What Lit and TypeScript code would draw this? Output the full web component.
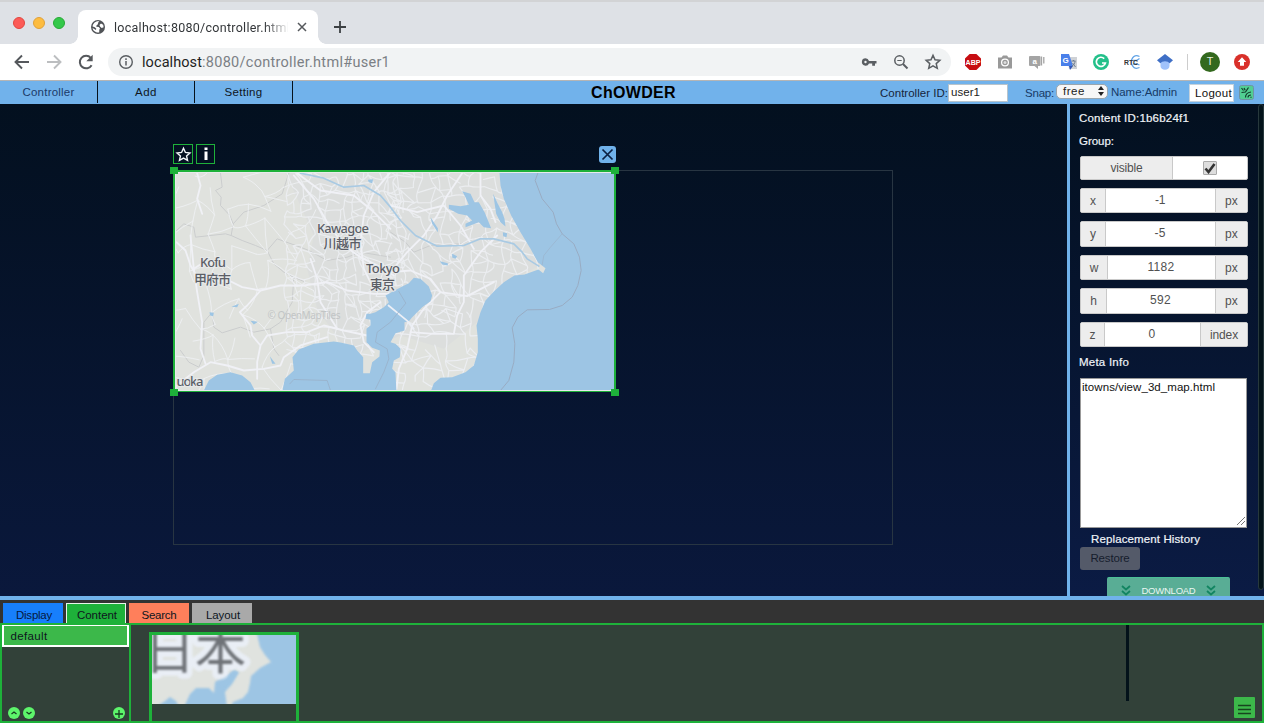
import { LitElement, html, svg, css } from "lit";
import { customElement } from "lit/decorators.js";

const UI = '"Liberation Sans", Arial, "Noto Sans CJK JP", sans-serif';
const CHROME = 'Roboto, "Liberation Sans", sans-serif';

// Letter-spacing that makes a label occupy a given advance width.
const pen = document.createElement("canvas").getContext("2d")!;
const spacing = (text: string, width: number, font: string) => {
  pen.font = font;
  return ((width - pen.measureText(text).width) / text.length).toFixed(3);
};
const label = (text: string, width: number, size = 11.5, weight = 400, family = UI) =>
  html`<span class="label" style="letter-spacing:${spacing(text, width, `${weight} ${size}px ${family}`)}px">${text}</span>`;

// Repeatable pseudo-random numbers for the minor road network.
const random = (seed: number) => () => {
  seed = (seed * 1664525 + 1013904223) % 4294967296;
  return seed / 4294967296;
};
const roads = (x0: number, y0: number, x1: number, y1: number, step: number, keep: number, seed: number) => {
  const r = random(seed);
  const cols = Math.ceil((x1 - x0) / step) + 1;
  const rows = Math.ceil((y1 - y0) / step) + 1;
  const pts = Array.from({ length: rows }, (_, j) =>
    Array.from({ length: cols }, (_, i) => [x0 + (i + (r() - 0.5) * 0.9) * step, y0 + (j + (r() - 0.5) * 0.9) * step])
  );
  let d = "";
  const link = (a: number[], b: number[]) => {
    const mx = (a[0] + b[0]) / 2 + (r() - 0.5) * step * 0.4;
    const my = (a[1] + b[1]) / 2 + (r() - 0.5) * step * 0.4;
    d += `M${a[0].toFixed(0)} ${a[1].toFixed(0)}Q${mx.toFixed(0)} ${my.toFixed(0)} ${b[0].toFixed(0)} ${b[1].toFixed(0)}`;
  };
  for (let j = 0; j < rows; j++)
    for (let i = 0; i < cols; i++) {
      if (i + 1 < cols && r() < keep) link(pts[j][i], pts[j][i + 1]);
      if (j + 1 < rows && r() < keep) link(pts[j][i], pts[j + 1][i]);
      if (i + 1 < cols && j + 1 < rows && r() < keep * 0.25) link(pts[j][i], pts[j + 1][i + 1]);
    }
  return d;
};

@customElement("kanto-map")
class KantoMap extends LitElement {
  static styles = css`
    :host { display: block; }
    svg { display: block; width: 100%; height: 100%; }
    .place { font: 500 13px "Noto Sans", "Noto Sans CJK JP", sans-serif; fill: #5b5e66; stroke: #e6e8e9; stroke-width: 2px; paint-order: stroke; text-anchor: middle; }
    .credit { font: 10px "Noto Sans", sans-serif; fill: #c2c5c6; }
  `;
  render() {
    return html`<svg viewBox="175.500 172.500 438 217" preserveAspectRatio="none">
      <rect x="175" y="172" width="440" height="219" fill="#e0e2de" />
      <g transform="translate(160 135) scale(.33333)" fill="none" stroke-linejoin="round" stroke-linecap="round">
        <path fill="#dcdedd" d="M370 100L1030 100 1080 250 1140 390 1040 440 950 560 850 640 720 600 600 650 540 620 470 520 440 400 460 300Z" />
        <g stroke="#cbcdce" stroke-width="3">
          <path d="M180 113L185 155 165 165 182 185 180 210 208 240 218 265 212 300 245 315 285 330 320 345 350 310 420 335 445 345 500 375 560 365 600 350 690 365" />
          <path d="M320 345L340 385 370 410 400 425 435 440M400 425L395 500 360 560 330 580 280 590 240 575 185 592 160 575 155 530 130 560 130 660 115 695 85 680 60 645M48 285L70 265 100 275 105 305 195 295 212 300M218 265L250 230 310 210 365 175 385 113M330 580L340 640 355 660" />
          <path d="M690 290L735 320 760 350 810 330 900 325 970 300" />
        </g>
        <path stroke="#edeff1" stroke-width="3" d="${roads(40, 100, 440, 770, 58, 0.48, 7)}" />
        <path stroke="#ebedf0" stroke-width="3.5" d="${roads(380, 100, 720, 640, 25, 0.72, 21)}" />
        <path stroke="#ebedf0" stroke-width="3.5" d="${roads(690, 100, 1130, 530, 31, 0.7, 33)}" />
        <path stroke="#eceef2" stroke-width="3.5" d="${roads(690, 530, 970, 770, 36, 0.7, 5)}" />
        <g stroke="#f0f1f6" stroke-width="5.5">
          <path d="M48 320L75 345 90 390 120 440 205 435 245 455 300 465 360 450 430 450 500 440 560 465 640 475 700 475M90 300L95 350 100 400 110 470 125 560 120 640 135 685" />
          <path d="M100 400L130 380 160 385M300 465L260 510 238 530 270 570 275 600 300 630 320 600 380 590 440 590 490 570 550 585 620 600M300 630L290 680 290 730" />
          <path d="M48 750L100 710 150 680 200 690 250 705 310 700 360 690 370 665 420 630 500 605M110 113L120 150 110 190 125 235" />
          <path d="M400 120L460 190 500 260 550 330 600 365 660 395 700 420M690 110L640 170 610 240 600 320 610 400 640 460" />
          <path d="M690 280L640 230 580 180 480 165 410 113M450 370L470 430 480 500 530 580" />
          <path d="M905 113L860 180 830 240 790 300 740 350 690 410M690 410L750 405 810 430 840 470 920 482 1000 440M840 470L790 520 755 570 740 640 715 700 708 760" />
          <path d="M750 590L820 595 880 595 890 540 910 500 910 420 960 350 1010 300M960 113L960 180 990 220 1005 260M690 210L770 230 850 210 900 270 940 340M660 500L620 530 600 570 610 620 640 650" />
        </g>
        <path stroke="#a9cae3" stroke-width="5" d="M420 113L490 128 550 155 610 150 660 180 690 215 720 255 765 300 830 332 910 330 960 310 1000 310 1060 325 1085 350 1100 370 1135 392" />
        <g fill="#9dc5e4">
          <path d="M1016 100L1020 150 1030 190 1052 240 1080 290 1110 340 1132 380 1155 398 1148 413 1134 402 1092 417 1062 420 1030 440 1000 468 975 495 960 530 948 570 952 610 952 650 940 690 915 710 875 725 840 727 820 743 810 770 1400 770 1400 100Z" />
          <path transform="translate(540 375)" d="M135 105L185 78 205 68 220 52 240 55 265 78 275 105 270 122 245 140 215 170 205 182 192 185 192 210 165 218 150 245 165 250 180 265 178 290 160 300 155 325 165 335 168 400H-176L-167 355-140 330-144 290-125 267-80 250-20 243 0 246 40 255 50 270 68 290 68 338 88 338 95 305 117 288 118 270 95 262 78 245 78 205 90 195 90 178 75 175 78 160 90 160 105 155 130 140 145 125Z" />
          <path d="M125 775L145 735 170 718 210 710 245 720 270 740 288 775ZM328 662L345 685 335 685ZM213 514L235 505 230 515ZM147 530L160 532 158 542 149 540ZM270 556L292 559 280 567ZM622 133L638 131 635 143 625 140Z" />
          <path d="M905 167L930 175 942 200 955 200 973 232 992 278 970 275 955 260 915 275 915 265 935 255 920 240 893 235 865 220 865 208 900 212 925 208 915 185ZM998 175L1012 205 1025 230 1032 250 1035 273 1020 260 1007 235ZM810 245L832 278 832 290 815 265ZM875 355L890 362 885 370 875 366ZM838 377L862 383 862 390 845 387ZM1027 290L1040 293 1038 305 1028 302Z" />
        </g>
        <path stroke="#eceff6" stroke-width="5" d="M684 510L745 560 760 580" />
        <g stroke="#99acc3" stroke-width="3">
          <path d="M1132 113L1124 135 1145 190 1178 230 1188 265 1205 295 1240 325 1257 365 1262 405 1252 450 1235 485 1205 510 1167 522 1100 523 1072 545 1055 577 1063 625 1060 680 1045 735 1020 765" />
          <path d="M1205 295L1170 335 1150 360 1145 388" stroke-width="1.500" />
          <path d="M715 468L736 503 690 560 650 590 645 620 680 640 685 670 670 710 645 760M388 745L400 732 500 735 510 765" stroke-width="2" />
        </g>
      </g>
      <text class="credit" x="267" y="318.500" textLength="73">© OpenMapTiles</text>
      <text class="place" x="342.500" y="232" textLength="52">Kawagoe</text><text class="place" x="342" y="247.500" textLength="38">川越市</text>
      <text class="place" x="212.500" y="266.500" textLength="26">Kofu</text><text class="place" x="212" y="283" textLength="37">甲府市</text>
      <text class="place" x="382.500" y="272.500" textLength="34">Tokyo</text><text class="place" x="382" y="288" textLength="25">東京</text>
      <text class="place" x="189.500" y="385" textLength="27">uoka</text>
    </svg>`;
  }
}

@customElement("japan-thumbnail")
class JapanThumbnail extends LitElement {
  static styles = css`
    :host { display: block; }
    svg { display: block; width: 100%; height: 100%; }
    .name { font: 400 51px "Noto Sans CJK JP", sans-serif; fill: #6f7378; stroke: #e9eef5; stroke-width: 12px; stroke-linejoin: round; paint-order: stroke; filter: blur(1px); }
    .land { filter: blur(.8px); }
  `;
  render() {
    return html`<svg viewBox="0 0 144 69">
      <rect width="144" height="69" fill="#e0e3df" />
      <path class="land" fill="#9dc5e4" d="M104 -5L108 12 113 20 119 27 108 33 99 41 98 48 96 57 91 63 81 67 78 74H150V-5Z" />
      <path class="land" fill="#9dc5e4" d="M32 72L38 59 44 53 57 53 62 58 63 47 72 43 82 35 87 37 80 49 73 57 75 72ZM4 72L13 66 18 62 24 66 27 72Z" />
      <text class="name" x="-8" y="34">日本</text>
      <path class="land" fill="#9dc5e4" opacity=".5" d="M64 46L73 42 82 35 86 38 79 48 72 53Z" />
    </svg>`;
  }
}

const star = "M12 3.200l2.700 5.900 6.400.7-4.800 4.300 1.400 6.300-5.700-3.300-5.700 3.300 1.400-6.300-4.800-4.300 6.400-.7z";

@customElement("browser-chrome")
class BrowserChrome extends LitElement {
  static styles = css`
    :host { display: block; height: 81px; box-sizing: border-box; border-bottom: 1px solid #b5b5b5; background: #fff; font: 14.5px Roboto, sans-serif; }
    svg { display: block; flex: none; }
    .label { white-space: nowrap; }
    .strip { height: 44px; background: #dee1e6; display: flex; box-sizing: border-box; padding-left: 13px; border-top: 2px solid #d2d3d5; }
    .lights { display: flex; gap: 8px; padding-top: 15px; width: 65px; }
    .light { width: 12px; height: 12px; border-radius: 50%; box-sizing: border-box; }
    .red { background: #fc5b57; border: 1px solid #e2463f; }
    .amber { background: #fdbc40; border: 1px solid #e0a13a; }
    .green { background: #34c84a; border: 1px solid #27aa35; }
    .tab { width: 240px; height: 34px; margin-top: 8px; background: #fff; border-radius: 8px 8px 0 0; display: flex; align-items: center; box-sizing: border-box; padding-left: 12px; position: relative; }
    .tab::before, .tab::after { content: ""; position: absolute; bottom: 0; width: 8px; height: 8px; }
    .tab::before { left: -8px; background: radial-gradient(circle at 0 0, transparent 7.5px, #fff 8px); }
    .tab::after { right: -8px; background: radial-gradient(circle at 100% 0, transparent 7.5px, #fff 8px); }
    .title { width: 174px; margin: 0 8px 0 8px; overflow: hidden; font-size: 12.5px; color: #333639; -webkit-mask: linear-gradient(to right, #000 150px, transparent 176px); }
    .plus { margin: 17px 0 0 14px; }
    .bar { height: 36px; display: flex; align-items: center; padding-left: 13px; }
    .back { margin-right: 14px; }
    .forward { margin-right: 14px; }
    .omni { margin-left: 13px; width: 843px; height: 28px; box-sizing: border-box; border-radius: 14px; background: #f1f3f4; display: flex; align-items: center; padding: 0 9px 0 10px; }
    .url { margin-left: 8px; flex: 1; color: #7b8085; }
    .host { color: #222; }
    .tools { display: flex; gap: 14px; }
    .ext { display: flex; align-items: center; gap: 14px; margin-left: 13px; }
    .rule { width: 1px; height: 16px; background: #cdcdcd; margin: 0 -2px 0 -1px; }
    .avatar { width: 20px; height: 20px; border-radius: 50%; background: #33691e; color: #e8f0e0; font-size: 11px; line-height: 20px; text-align: center; margin-right: -1px; }
    .abp { font: 700 8px "Liberation Sans", sans-serif; fill: #fff; }
    .tiny { font: 700 8px "Liberation Sans", sans-serif; }
  `;
  render() {
    return html`
      <div class="strip">
        <div class="lights"><i class="light red"></i><i class="light amber"></i><i class="light green"></i></div>
        <div class="tab">
          <svg width="16" height="16" viewBox="0 0 16 16"><circle cx="8" cy="8" r="7" fill="#505357" /><path fill="#fff" d="M9.300 2.400l-1.500 1.500.4 1.200-1.600 1.100-.3 1.600 2.500.1 1.200 1.500-.7 1.400-.1 2.600C6.600 14 3 12.300 2.600 9l3.300 2 .4-1.300-1.500-1.500-2.200-.7C2.800 4.500 5.700 1.700 9.300 2.400zM11 4.500l2.200 1.300.4 2.500-1.900.7-1.500-1.300L9.400 6z" /></svg>
          <div class="title">${label("localhost:8080/controller.html", 176, 12.5, 400, CHROME)}</div>
          <svg width="12" height="12" viewBox="0 0 12 12"><path d="M2 2l8 8M10 2l-8 8" stroke="#55585c" stroke-width="1.500" /></svg>
        </div>
        <svg class="plus" width="16" height="16" viewBox="0 0 16 16"><path d="M8 2v12M2 8h12" stroke="#3c4043" stroke-width="1.800" /></svg>
      </div>
      <div class="bar">
        <svg class="back" width="18" height="18" viewBox="0 0 18 18"><path d="M16 9H3M9 2.500L2.500 9 9 15.500" fill="none" stroke="#55585c" stroke-width="1.900" /></svg>
        <svg class="forward" width="18" height="18" viewBox="0 0 18 18"><path d="M2 9h13M9 2.500L15.500 9 9 15.500" fill="none" stroke="#bcbec0" stroke-width="1.900" /></svg>
        <svg width="18" height="18" viewBox="0 0 18 18"><path d="M14.600 12.200A6.300 6.300 0 1 1 13.800 4.800" fill="none" stroke="#55585c" stroke-width="2" /><path d="M15.700 1.800v6.400H9.300z" fill="#55585c" /></svg>
        <div class="omni">
          <svg width="16" height="16" viewBox="0 0 16 16"><circle cx="8" cy="8" r="6.300" fill="none" stroke="#5a5e62" stroke-width="1.400" /><path d="M8 7v4.500M8 4.300v1.600" stroke="#5a5e62" stroke-width="1.500" /></svg>
          <div class="url"><span class="host">${label("localhost", 60, 14.5, 400, CHROME)}</span>${label(":8080/controller.html#user1", 188, 14.5, 400, CHROME)}</div>
          <div class="tools">
            <svg width="18" height="18" viewBox="0 0 18 18"><path fill="#5a5e62" fill-rule="evenodd" d="M5.500 5.300a3.700 3.700 0 0 1 3.500 2.600h7.500v2.500H15v2.300h-2.800v-2.300H9a3.700 3.700 0 1 1-3.500-5.100zm0 2.500a1.200 1.200 0 1 0 0 2.400 1.200 1.200 0 0 0 0-2.400z" /></svg>
            <svg width="18" height="18" viewBox="0 0 18 18"><g fill="none" stroke="#5a5e62"><circle cx="7.500" cy="7.500" r="4.700" stroke-width="1.500" /><path d="M11 11l4.500 4.500" stroke-width="2" /><path d="M5.300 7.500h4.400" /></g></svg>
            <svg width="18" height="18" viewBox="0 0 24 24"><path d="${star}" fill="none" stroke="#5a5e62" stroke-width="2" /></svg>
          </div>
        </div>
        <div class="ext">
          <svg width="18" height="18" viewBox="0 0 18 18"><path d="M5.600 1h6.800L17 5.600v6.800L12.400 17H5.600L1 12.400V5.600z" fill="#c70d12" /><text class="abp" x="1.500" y="11.900" textLength="15" lengthAdjust="spacingAndGlyphs">ABP</text></svg>
          <svg width="18" height="18" viewBox="0 0 18 18"><path d="M2 4.500h3.500L7 2.500h4l1.500 2H16v11H2z" fill="#999"/><circle cx="9" cy="9.500" r="3.400" fill="none" stroke="#fff" stroke-width="1.300" /><circle cx="9" cy="9.500" r="1.500" fill="#ddd" /></svg>
          <svg width="18" height="18" viewBox="0 0 18 18"><path d="M2 3h9.500q1 0 1 1v8q0 1-1 1H10v3l-3.500-3H2q-1 0-1-1V4q0-1 1-1z" fill="#a4a4a4" /><path d="M13.500 3.500v9M15.800 4v6.500" fill="none" stroke="#a4a4a4" stroke-width="1.300" /><text class="tiny" x="4.500" y="10.500" fill="#fff">a</text></svg>
          <svg width="18" height="18" viewBox="0 0 18 18"><path d="M7 4h10v12H9z" fill="#cfd2d6" /><path d="M1 1h8l4 12H1z" fill="#4a80ea" /><path d="M9 13h4l-3 4z" fill="#3457b5" /><text class="tiny" x="2.500" y="9.500" fill="#fff">G</text><path d="M11.500 8h4M13.500 7v1M12 13c2-1 3-3 3-5M12.500 10l3 4" fill="none" stroke="#6f7d90" /></svg>
          <svg width="18" height="18" viewBox="0 0 18 18"><circle cx="9" cy="9" r="8" fill="#23c08a" /><path d="M12.200 5.600A4.600 4.600 0 1 0 13.400 10H10" fill="none" stroke="#fff" stroke-width="1.700" /></svg>
          <svg width="18" height="18" viewBox="0 0 18 18"><path d="M15.500 3.500C10 1 8.500 5 7.500 7v4c1 2 2.500 6 8 3.500M9 7.500h3.500l3-2M9 11h3.500l3 1" fill="none" stroke="#63a4e6" stroke-width="1.300" /><text class="tiny" x="0" y="11.500" fill="#333" textLength="14" lengthAdjust="spacingAndGlyphs">RTC</text></svg>
          <svg width="18" height="18" viewBox="0 0 18 18"><path d="M4.500 8h9v5a4.500 3.800 0 0 1-9 0z" fill="#a0c2fb" /><path d="M9 1l8 6.300-3.300 3a5.300 4 0 0 0-9.400 0L1 7.300z" fill="#3f6fc6" /></svg>
          <i class="rule"></i>
          <div class="avatar">T</div>
          <svg width="18" height="18" viewBox="0 0 18 18"><circle cx="9" cy="9" r="8" fill="#d9302a" /><path d="M9 4.300l4.300 4.700H11v3.700H7V9H4.700z" fill="#fff" /></svg>
        </div>
      </div>`;
  }
}

@customElement("app-root")
class AppRoot extends LitElement {
  static styles = css`
    :host { display: flex; flex-direction: column; width: 1264px; height: 724px; overflow: hidden; font: 11.5px "Liberation Sans", Arial, "Noto Sans CJK JP", sans-serif; color: #0e161e; }
    * { box-sizing: border-box; }
    svg { display: block; flex: none; }
    .label { white-space: nowrap; }
    .menu { display: grid; grid-template-columns: 98px 97px 98px 1fr; height: 23px; background: #71b2eb; position: relative; }
    .item { border-right: 1px solid #06121c; height: 22px; line-height: 22px; text-align: center; }
    .current { color: #1c3a68; }
    .status { display: flex; align-items: center; justify-content: flex-end; padding: 0 10px 0 0; color: #16243a; }
    .brand { position: absolute; left: 591px; top: 2px; font-size: 16px; font-weight: 700; line-height: 20px; color: #000; }
    .field { width: 60px; height: 18px; background: #fff; border: 1px solid #b8c4cc; line-height: 14px; padding-left: 2px; margin-right: 17px; color: #222; }
    .select { width: 52px; height: 15px; border: 1px solid #9aa6ae; border-radius: 5px; background: #f7f7f7; display: flex; align-items: center; justify-content: space-between; padding: 0 2px 0 6px; margin: -3px 3px 0 2px; color: #222; }
    .who { color: #173a66; margin-right: 12px; padding-bottom: 2px; }
    .snap { color: #173a66; }
    .logout { width: 45px; height: 18px; background: #fff; border: 1px solid #c5d2dc; line-height: 16px; padding-left: 5px; margin-right: 5px; color: #111; }
    .link { width: 15px; }
    .work { height: 492px; display: grid; grid-template-columns: 1067px 1fr; }
    .stage { position: relative; background: linear-gradient(#03101f, #0a183c); }
    .screen { position: absolute; left: 173px; top: 66px; width: 720px; height: 375px; border: 1px solid #283542; }
    .content { position: absolute; left: 173px; top: 66px; width: 443px; height: 222px; border: 3px solid #1eb13a; border-width: 2px 2px 1px 2px; background: #e8ebec; padding: 1px 1px 2px 1px; }
    .content kanto-map { width: 438px; height: 217px; }
    .grip { position: absolute; width: 8px; height: 7px; background: #1eb13a; }
    .nw { left: 170px; top: 63px; } .ne { left: 611px; top: 63px; }
    .sw { left: 170px; top: 285px; } .se { left: 611px; top: 285px; }
    .mark { position: absolute; left: 173px; top: 40px; display: flex; gap: 3px; }
    .box { height: 20px; width: 20px; border: 1px solid #1eb13a; display: grid; place-items: center; }
    .slim { width: 19px; }
    .close { position: absolute; left: 599px; top: 42px; width: 17px; height: 17px; border-radius: 3px; background: #70b2eb; }
    .side { background: linear-gradient(#03101f, #0b1b44); border-left: 3px solid #70b2eb; color: #f0f4f8; display: flex; overflow: hidden; }
    .props { width: 187px; padding: 5px 10px 0 10px; display: flex; flex-direction: column; flex: none; }
    .props .head { line-height: 18px; height: 18px; margin-left: -1px; flex: none; -webkit-text-stroke: .2px #f0f4f8; }
    .group { margin-top: 5px; }
    .fields { display: flex; flex-direction: column; gap: 8px; margin-top: 6px; width: 168px; }
    .row { display: flex; height: 25.400px; border: 1px solid #c9c9c9; border-radius: 2px; background: #fff; color: #515151; overflow: hidden; text-align: center; line-height: 24px; font-size: 12px; }
    .short { height: 24px; }
    .key, .unit { background: #ededed; flex: none; }
    .key { border-right: 1px solid #c9c9c9; }
    .unit { border-left: 1px solid #c9c9c9; }
    .value { flex: 1; line-height: 22px; padding-right: 1px; }
    .k24 { width: 24px; } .k25 { width: 25px; } .k26 { width: 26px; } .k27 { width: 27px; } .wide { width: 92px; line-height: 22px; }
    .u { width: 32px; } .u48 { width: 47px; }
    .check { width: 14px; height: 14px; margin: 4px auto; border: 1px solid #aaa; background: #ddd; border-radius: 1px; }
    .meta { margin-top: 6px; }
    .note { margin-top: 7px; width: 167px; height: 150px; flex: none; border: 1px solid #999; background: #fff; color: #111; padding: 1px 2px 1px 1px; line-height: 14px; display: flex; justify-content: space-between; }
    .corner { align-self: flex-end; margin-right: -2px; }
    .props .history { margin: 2px 0 0 11px; }
    .restore { flex: none; width: 60px; height: 23px; border-radius: 3px; background: #545a69; color: #161d2d; text-align: center; line-height: 22px; margin-top: -1px; }
    .download { flex: none; width: 123px; height: 26px; margin: 7px 0 0 27px; border-radius: 2px 2px 0 0; background: #59ad95; border-top: 1px solid #4bc097; display: flex; align-items: center; justify-content: space-between; padding: 0 14px; color: #eaf6f2; font-size: 9.5px; }
    .scroll { width: 6px; height: 486px; margin-left: 1px; border: 1px solid #27383c; border-radius: 3px; background: #04141b; }
    .tabs { border-top: 4px solid #70b2eb; height: 27px; background: #333; display: flex; gap: 3px; padding: 3px 0 0 3px; }
    .pick { width: 60px; height: 20px; text-align: center; line-height: 14px; padding-top: 5px; }
    .display { background: #177ffc; color: #05183c; padding-left: 2px; }
    .cont { background: #1eb13a; border: 1px solid #e8f5ea; border-bottom: 0; padding: 4px 0 0 2px; }
    .search { background: #ff7f5b; }
    .layout { background: #a9a9a9; padding-left: 2px; }
    .dock { flex: 1; border: 2px solid #1eb13a; background: #324139; display: flex; margin-bottom: 1px; height: 100px; min-height: 0; position: relative; overflow: hidden; }
    .groups { width: 129px; border-right: 2px solid #1eb13a; display: flex; flex-direction: column; justify-content: space-between; }
    .entry { height: 23px; border: 2px solid #fff; background: #3cb84a; line-height: 20px; padding-left: 6.500px; margin-top: -1px; }
    .actions { display: flex; gap: 3px; padding: 0 4px 0 6px; height: 14px; }
    .add { margin-left: auto; }
    .thumbs { padding: 7px 0 0 18px; flex: 1; }
    .thumb { width: 150px; height: 110px; border: 3px solid #1eb13a; }
    .thumb japan-thumbnail { width: 144px; height: 69px; }
    .rail { width: 3px; height: 76px; background: #03121a; }
    .more { width: 21px; height: 21px; background: #3cb84a; border-radius: 1px; align-self: flex-end; margin: 0 7px 3px 0; }
    .end { display: flex; flex: none; width: 136px; justify-content: space-between; }
  `;
  row(key: string, cls: string, value: string, width: number, unit = "px") {
    return html`<div class="row"><div class="key ${cls}">${key}</div><div class="value">${label(value, width, 12)}</div>
      <div class="unit ${unit === "px" ? "u" : "u48"}">${label(unit, unit === "px" ? 13 : 28, 12)}</div></div>`;
  }
  render() {
    const chevrons = svg`<path d="M1 1l4 3.500L9 1M1 6l4 3.500L9 6" fill="none" stroke="#128561" stroke-width="1.800"/>`;
    return html`
      <browser-chrome></browser-chrome>
      <nav class="menu">
        <div class="item current">${label("Controller", 52)}</div>
        <div class="item">${label("Add", 22)}</div>
        <div class="item">${label("Setting", 38)}</div>
        <div class="status">
          ${label("Controller ID:", 68)}
          <div class="field">${label("user1", 29)}</div>
          <span class="snap">${label("Snap:", 29)}</span>
          <div class="select">${label("free", 22)}<svg width="8" height="12" viewBox="0 0 8 12"><path d="M4 1l3 4H1zM4 11l3-4H1z" fill="#222" /></svg></div>
          <span class="who">${label("Name:Admin", 66)}</span>
          <div class="logout">${label("Logout", 37)}</div>
          <svg class="link" width="15" height="15" viewBox="0 0 15 15"><rect x=".5" y=".5" width="14" height="14" rx="2" fill="#51cf93" stroke="#6f94a5" /><path d="M2.500 3l2 2.500M5 3l1.200 2.300M2.500 7.500l4-.5 3-4.500M6.500 12.500c0-3 2-5 5.500-5.500M9 12.500c0-1.500 1-2.500 3-2.500M11.500 12.500l1-.5" fill="none" stroke="#123c2b" stroke-width="1.200" /></svg>
        </div>
        <div class="brand">${label("ChOWDER", 85, 16, 700)}</div>
      </nav>
      <main class="work">
        <section class="stage">
          <div class="screen"></div>
          <div class="content"><kanto-map></kanto-map></div>
          <i class="grip nw"></i><i class="grip ne"></i><i class="grip sw"></i><i class="grip se"></i>
          <div class="mark">
            <div class="box"><svg width="17" height="17" viewBox="0 0 24 24"><path d="${star}" fill="none" stroke="#f4f7fa" stroke-width="2" /></svg></div>
            <div class="box slim"><svg width="12" height="14" viewBox="0 0 12 14"><path d="M4.500 .5h3v2.500h-3zM4.500 4.500h3V13h-3z" fill="#fff" /></svg></div>
          </div>
          <div class="close"><svg width="17" height="17" viewBox="0 0 17 17"><path d="M3.500 3.500l10 10M13.500 3.500l-10 10" stroke="#0b1f42" stroke-width="1.700" /></svg></div>
        </section>
        <aside class="side">
          <div class="props">
            <div class="head">${label("Content ID:1b6b24f1", 110)}</div>
            <div class="head group">${label("Group:", 35)}</div>
            <div class="fields">
              <div class="row short"><div class="key wide">${label("visible", 32, 12)}</div><div class="value"><div class="check"><svg width="12" height="12" viewBox="0 0 12 12"><path d="M1.500 6.500l3 3.500L10.500 2" fill="none" stroke="#333" stroke-width="2.600" /></svg></div></div></div>
              ${this.row("x", "k25", "-1", 10)}
              ${this.row("y", "k25", "-5", 11)}
              ${this.row("w", "k27", "1182", 27)}
              ${this.row("h", "k26", "592", 21)}
              ${this.row("z", "k24", "0", 7, "index")}
            </div>
            <div class="head meta">${label("Meta Info", 50)}</div>
            <div class="note">${label("itowns/view_3d_map.html", 133)}<svg class="corner" width="10" height="10" viewBox="0 0 10 10"><path d="M1 9l8-8M5 9l4-4" stroke="#777" /></svg></div>
            <div class="head history">${label("Replacement History", 109)}</div>
            <div class="restore">${label("Restore", 39)}</div>
            <div class="download"><svg width="10" height="11" viewBox="0 0 10 11">${chevrons}</svg>${label("DOWNLOAD", 54, 9.5)}<svg width="10" height="11" viewBox="0 0 10 11">${chevrons}</svg></div>
          </div>
          <div class="scroll"></div>
        </aside>
      </main>
      <nav class="tabs">
        <div class="pick display">${label("Display", 36)}</div>
        <div class="pick cont">${label("Content", 40)}</div>
        <div class="pick search">${label("Search", 35)}</div>
        <div class="pick layout">${label("Layout", 34)}</div>
      </nav>
      <section class="dock">
        <div class="groups">
          <div class="entry">${label("default", 37)}</div>
          <div class="actions">
            <svg width="12" height="12" viewBox="0 0 12 12"><circle cx="6" cy="6" r="6" fill="#5df56b" /><path d="M3.500 7L6 5l2.500 2" fill="none" stroke="#163d20" stroke-width="1.300" /></svg>
            <svg width="12" height="12" viewBox="0 0 12 12"><circle cx="6" cy="6" r="6" fill="#5df56b" /><path d="M3.500 5L6 7l2.500-2" fill="none" stroke="#163d20" stroke-width="1.300" /></svg>
            <svg class="add" width="12" height="12" viewBox="0 0 12 12"><circle cx="6" cy="6" r="6" fill="#5df56b" /><path d="M6 3v8M2 7h8" stroke="#163d20" stroke-width="1.300" /></svg>
          </div>
        </div>
        <div class="thumbs"><div class="thumb"><japan-thumbnail></japan-thumbnail></div></div>
        <div class="end"><div class="rail"></div><div class="more"><svg width="21" height="21" viewBox="0 0 21 21"><path d="M4 8.500h13M4 12.500h13M4 16.500h13" stroke="#17451f" stroke-width="1.300" /></svg></div></div>
      </section>`;
  }
}
